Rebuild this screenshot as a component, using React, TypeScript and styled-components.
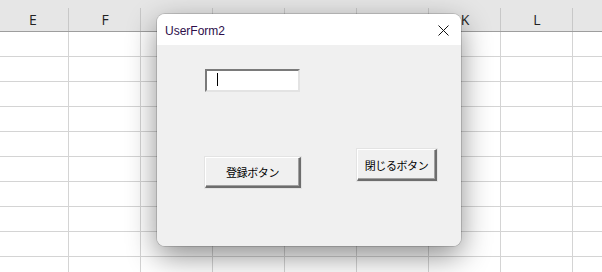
import styled, { createGlobalStyle } from 'styled-components';

const GlobalStyle = createGlobalStyle`
  html, body {
    margin: 0;
    padding: 0;
    background: #ffffff;
    overflow: hidden;
  }
`;

// M is only partly on screen, its label falls outside the window
const columns = ['E', 'F', 'G', 'H', 'I', 'J', 'K', 'L', ''];
const rows = Array.from({ length: 10 }, (_, i) => i);

const Sheet = styled.div`
  position: relative;
  width: 602px;
  height: 272px;
  overflow: hidden;
  background: #ffffff;
  font-family: "Liberation Sans", Arial, sans-serif;
`;

const HeaderRow = styled.div`
  display: flex;
  margin-left: -3px;
  height: 32px;
  background: #e6e6e6;
  border-bottom: 1px solid #9e9e9e;
  box-sizing: border-box;
`;

const HeaderCell = styled.div`
  position: relative;
  flex: 0 0 72px;
  display: flex;
  align-items: center;
  justify-content: center;
  padding-top: 8px;
  box-sizing: border-box;
  font-family: "Open Sans", "Liberation Sans", sans-serif;
  font-size: 14px;
  color: #222222;

  &::after {
    content: '';
    position: absolute;
    right: 0;
    top: 8px;
    bottom: 0;
    width: 1px;
    background: #c8c8c8;
  }
`;

const Row = styled.div`
  display: flex;
  margin-left: -3px;
  height: 25px;
`;

const Cell = styled.div`
  flex: 0 0 72px;
  height: 25px;
  box-sizing: border-box;
  border-right: 1px solid #d4d4d4;
  border-bottom: 1px solid #d4d4d4;
`;

const Dialog = styled.div`
  position: absolute;
  left: 157px;
  top: 14px;
  width: 304px;
  height: 232px;
  border-radius: 8px;
  overflow: hidden;
  display: flex;
  flex-direction: column;
  background: #f0f0f0;
  box-shadow: 0 0 0 1px rgba(0, 0, 0, 0.14), 0 10px 30px rgba(0, 0, 0, 0.45);
`;

const TitleBar = styled.div`
  flex: 0 0 31px;
  display: flex;
  align-items: center;
  justify-content: space-between;
  padding: 2px 8px 0 8px;
  box-sizing: border-box;
  background: #ffffff;
`;

const Title = styled.span`
  font-family: "Liberation Sans", Arial, sans-serif;
  font-size: 12px;
  color: #2d0e4a;
`;

const CloseButton = styled.div`
  width: 20px;
  height: 20px;
  display: flex;
  align-items: center;
  justify-content: center;
`;

const FormBody = styled.div`
  position: relative;
  flex: 1;
  background: #f0f0f0;
`;

const TextBox = styled.div`
  position: absolute;
  left: 48px;
  top: 24px;
  width: 95px;
  height: 23px;
  box-sizing: border-box;
  background: #ffffff;
  border-top: 2px solid #7a7a7a;
  border-left: 2px solid #7a7a7a;
  border-right: 2px solid #e3e3e3;
  border-bottom: 2px solid #e3e3e3;
`;

const Caret = styled.div`
  position: absolute;
  left: 10px;
  top: 2px;
  width: 1px;
  height: 13px;
  background: #000000;
`;

const FormButton = styled.div<{ $left: number; $top: number; $width: number; $height: number }>`
  position: absolute;
  left: ${p => p.$left}px;
  top: ${p => p.$top}px;
  width: ${p => p.$width}px;
  height: ${p => p.$height}px;
  box-sizing: border-box;
  display: flex;
  align-items: center;
  justify-content: center;
  background: #f0f0f0;
  border-top: 1px solid #ffffff;
  border-left: 1px solid #ffffff;
  border-right: 2px solid #6d6d6d;
  border-bottom: 2px solid #6d6d6d;
  box-shadow: inset -1px -1px 0 #a0a0a0, 0 0 0 1px #e3e3e3;
  font-family: "Noto Sans CJK JP", "Noto Sans", sans-serif;
  font-size: 11px;
  letter-spacing: -0.4px;
  color: #000000;
`;

export default function App() {
  return (
    <>
      <GlobalStyle />
      <Sheet>
        <HeaderRow>
          {columns.map((c, i) => (
            <HeaderCell key={i}>{c}</HeaderCell>
          ))}
        </HeaderRow>
        {rows.map(r => (
          <Row key={r}>
            {columns.map((c, i) => (
              <Cell key={i} />
            ))}
          </Row>
        ))}

        <Dialog>
          <TitleBar>
            <Title>UserForm2</Title>
            <CloseButton>
              <svg width="11" height="11" viewBox="0 0 11 11">
                <path d="M0.5 0.5 L10.5 10.5 M10.5 0.5 L0.5 10.5" stroke="#111" strokeWidth="1" fill="none" />
              </svg>
            </CloseButton>
          </TitleBar>
          <FormBody>
            <TextBox>
              <Caret />
            </TextBox>
            <FormButton $left={48} $top={112} $width={96} $height={31}>登録ボタン</FormButton>
            <FormButton $left={200} $top={104} $width={80} $height={32}>閉じるボタン</FormButton>
          </FormBody>
        </Dialog>
      </Sheet>
    </>
  );
}
